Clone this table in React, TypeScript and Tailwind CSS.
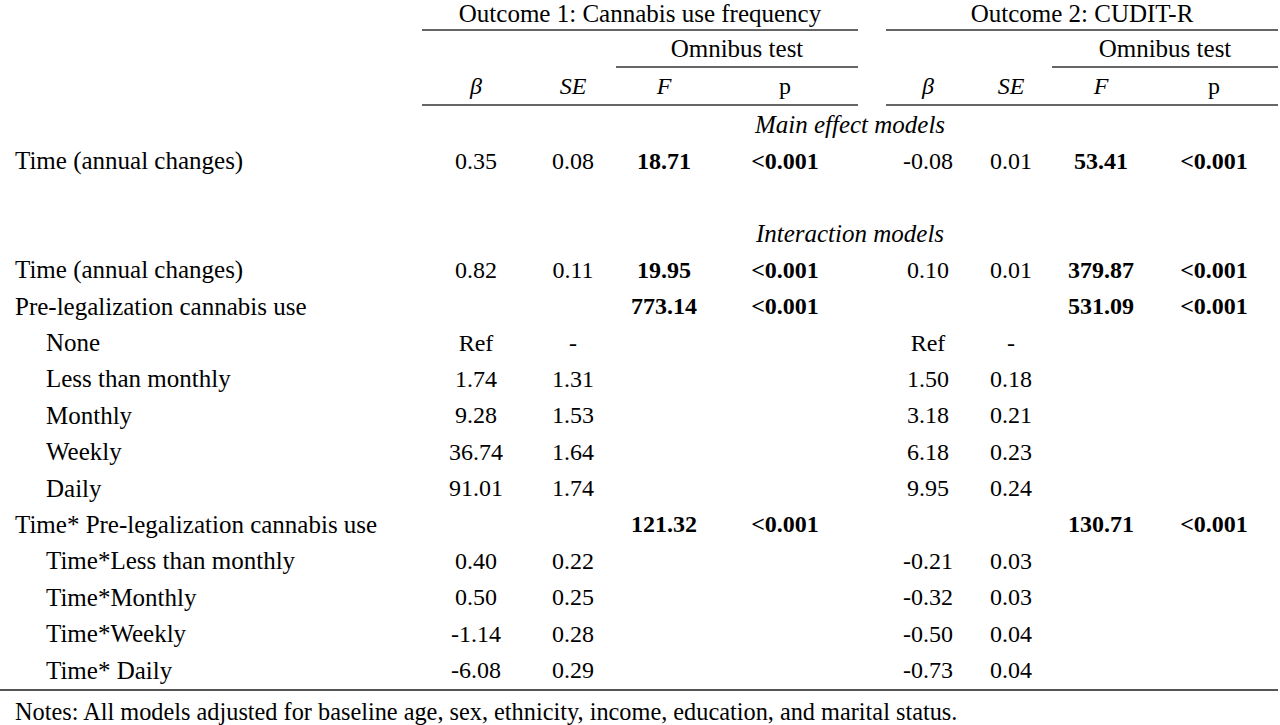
const cols = "grid grid-cols-[422px_108px_86px_96px_146px_28px_84px_82px_98px_128px]";

type Row = {
  label?: string;
  indent?: boolean;
  section?: string;
  v?: [string, string, string, string, string, string, string, string];
};

const rows: Row[] = [
  { section: "Main effect models" },
  { label: "Time (annual changes)", v: ["0.35", "0.08", "18.71", "<0.001", "-0.08", "0.01", "53.41", "<0.001"] },
  {},
  { section: "Interaction models" },
  { label: "Time (annual changes)", v: ["0.82", "0.11", "19.95", "<0.001", "0.10", "0.01", "379.87", "<0.001"] },
  { label: "Pre-legalization cannabis use", v: ["", "", "773.14", "<0.001", "", "", "531.09", "<0.001"] },
  { label: "None", indent: true, v: ["Ref", "-", "", "", "Ref", "-", "", ""] },
  { label: "Less than monthly", indent: true, v: ["1.74", "1.31", "", "", "1.50", "0.18", "", ""] },
  { label: "Monthly", indent: true, v: ["9.28", "1.53", "", "", "3.18", "0.21", "", ""] },
  { label: "Weekly", indent: true, v: ["36.74", "1.64", "", "", "6.18", "0.23", "", ""] },
  { label: "Daily", indent: true, v: ["91.01", "1.74", "", "", "9.95", "0.24", "", ""] },
  { label: "Time* Pre-legalization cannabis use", v: ["", "", "121.32", "<0.001", "", "", "130.71", "<0.001"] },
  { label: "Time*Less than monthly", indent: true, v: ["0.40", "0.22", "", "", "-0.21", "0.03", "", ""] },
  { label: "Time*Monthly", indent: true, v: ["0.50", "0.25", "", "", "-0.32", "0.03", "", ""] },
  { label: "Time*Weekly", indent: true, v: ["-1.14", "0.28", "", "", "-0.50", "0.04", "", ""] },
  { label: "Time* Daily", indent: true, v: ["-6.08", "0.29", "", "", "-0.73", "0.04", "", ""] },
];

const Cell = ({ text, bold, italic }: { text: string; bold?: boolean; italic?: boolean }) => (
  <div className={`flex items-center justify-center text-[24px] ${bold ? "font-bold" : ""} ${italic ? "italic" : ""}`}>
    {text}
  </div>
);

function BodyRow({ row }: { row: Row }) {
  if (row.section) {
    return (
      <div className={`${cols} h-[36.4px]`}>
        <div />
        <div className="col-span-9 flex items-center justify-center italic">{row.section}</div>
      </div>
    );
  }
  if (!row.v) return <div className="h-[36.4px]" />;
  const v = row.v;
  return (
    <div className={`${cols} h-[36.4px]`}>
      <div className={`flex items-center ${row.indent ? "pl-[46px]" : "pl-[15px]"}`}>{row.label}</div>
      <Cell text={v[0]} />
      <Cell text={v[1]} />
      <Cell text={v[2]} bold />
      <Cell text={v[3]} bold />
      <div />
      <Cell text={v[4]} />
      <Cell text={v[5]} />
      <Cell text={v[6]} bold />
      <Cell text={v[7]} bold />
    </div>
  );
}

export default function App() {
  return (
    <div className="h-[725px] w-[1280px] overflow-hidden bg-white text-[25px] leading-none text-black [font-family:'Liberation_Serif',serif]">
      {/* header */}
      <div className={`${cols} h-[31px]`}>
        <div />
        <div className="col-span-4 flex justify-center border-b-2 border-[#666] pt-[1px]">Outcome 1: Cannabis use frequency</div>
        <div />
        <div className="col-span-4 flex justify-center border-b-2 border-[#666] pt-[1px]">Outcome 2: CUDIT-R</div>
      </div>
      <div className={`${cols} h-[37px]`}>
        <div className="col-span-3" />
        <div className="col-span-2 flex items-center justify-center border-b-2 border-[#666]">Omnibus test</div>
        <div className="col-span-3" />
        <div className="col-span-2 flex items-center justify-center border-b-2 border-[#666]">Omnibus test</div>
      </div>
      <div className={`${cols} h-[38px]`}>
        <div />
        <div className="col-span-4 grid grid-cols-[108px_86px_96px_146px] border-b-2 border-[#666]">
          <Cell text="β" italic />
          <Cell text="SE" italic />
          <Cell text="F" italic />
          <Cell text="p" />
        </div>
        <div />
        <div className="col-span-4 grid grid-cols-[84px_82px_98px_128px] border-b-2 border-[#666]">
          <Cell text="β" italic />
          <Cell text="SE" italic />
          <Cell text="F" italic />
          <Cell text="p" />
        </div>
      </div>
      {rows.map((r, i) => (
        <BodyRow key={i} row={r} />
      ))}
      <div className="mr-[2px] mt-[1px] border-t-2 border-[#555]" />
      <div className="pl-[15px] pt-[9px] text-[24.3px]">
        Notes: All models adjusted for baseline age, sex, ethnicity, income, education, and marital status.
      </div>
    </div>
  );
}
